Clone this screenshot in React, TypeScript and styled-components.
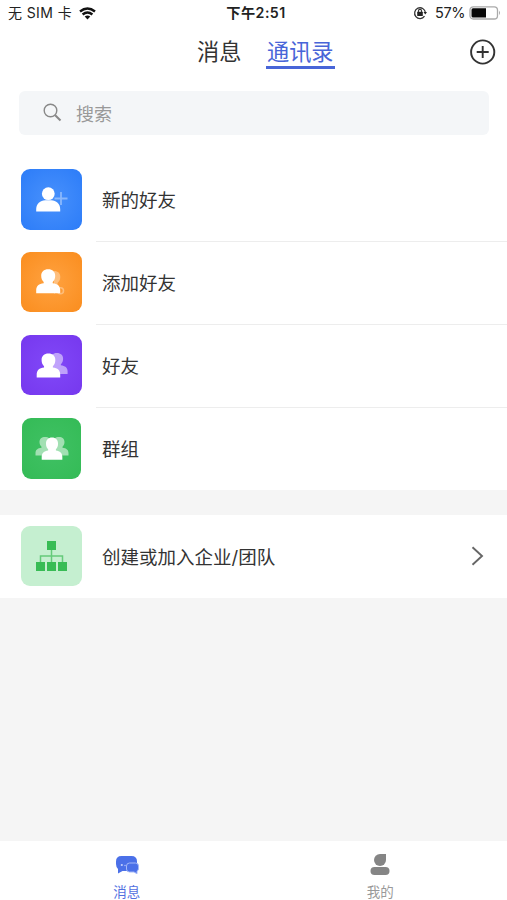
import React from 'react';
import styled, { createGlobalStyle } from 'styled-components';

const GlobalStyle = createGlobalStyle`
  * { box-sizing: border-box; }
  body { margin: 0; background: #f5f5f5; }
  svg { display: block; flex: none; }
`;

const Screen = styled.div`
  width: 507px;
  height: 900px;
  display: flex;
  flex-direction: column;
  overflow: hidden;
  background: #f5f5f5;
  color: #333;
  font-family: Inter, 'Noto Sans CJK SC', sans-serif;
`;

const Top = styled.header`
  background: #fff;
  height: 158px;
`;

const StatusBar = styled.div`
  height: 28px;
  display: grid;
  grid-template-columns: 1fr auto 1fr;
  align-items: center;
  padding: 0 6px 2px 8px;
  font-size: 14px;
  line-height: 20px;
  color: #222;
`;

const StatusSide = styled.div<{ $end?: boolean }>`
  display: flex;
  align-items: center;
  justify-content: ${(p) => (p.$end ? 'flex-end' : 'flex-start')};
  white-space: pre;
`;

const Carrier = styled.span`
  width: 71px;
  font-size: 14px;
  letter-spacing: 0.4px;
`;

const Clock = styled.div`
  font-weight: 600;
  font-size: 14.2px;
  letter-spacing: 0.45px;
  padding-left: 3px;
`;

const Percent = styled.span`
  width: 31px;
  margin: 0 3px 0 8px;
  font-size: 14.5px;
  letter-spacing: -0.35px;
`;

const Nav = styled.nav`
  height: 48px;
  display: grid;
  grid-template-columns: 197px 44px 25px 1fr 37px;
  align-items: start;
`;

const NavTab = styled.div<{ $active?: boolean }>`
  width: max-content;
  height: 41px;
  padding: 7px 1px 0;
  margin-left: ${(p) => (p.$active ? 0 : -1)}px;
  font-size: 22.2px;
  line-height: 33px;
  color: ${(p) => (p.$active ? '#4865d8' : '#333')};
  grid-column: ${(p) => (p.$active ? 4 : 2)};
  border-bottom: ${(p) => (p.$active ? '3px solid #4865d8' : '0')};
`;

const AddButton = styled.div`
  grid-column: 5;
  padding-top: 11px;
`;

const Search = styled.div`
  margin: 15px 18px 0 19px;
  height: 44px;
  border-radius: 6px;
  background: #f4f6f8;
  display: flex;
  align-items: center;
  gap: 14px;
  padding: 0 0 1px 24px;
  font-size: 18px;
  color: #999;
`;

const List = styled.section`
  background: #fff;
`;

const Row = styled.div`
  height: 83px;
  display: flex;
  align-items: center;
  padding-left: 21px;
`;

const RowBody = styled.div<{ $line?: boolean }>`
  flex: 1;
  height: 83px;
  margin-left: 14px;
  padding: 0 23px 1px 6px;
  display: flex;
  align-items: center;
  justify-content: space-between;
  font-size: 18.5px;
  box-shadow: ${(p) => (p.$line ? '0 1px 0 #ededed' : 'none')};
`;

const Tile = styled.div<{ $bg: string; $height?: number; $narrow?: boolean }>`
  width: ${(p) => (p.$narrow ? 59 : 61)}px;
  height: ${(p) => p.$height ?? 60}px;
  margin: 0 ${(p) => (p.$narrow ? 1 : 0)}px 1px;
  border-radius: 9px;
  background: ${(p) => p.$bg};
  display: flex;
  align-items: center;
  justify-content: center;
`;

const Team = styled(List)`
  margin-top: 25px;
`;

const TabBar = styled.footer`
  height: 59px;
  margin-top: auto;
  background: #fff;
  display: grid;
  grid-template-columns: 1fr 1fr;
`;

const Tab = styled.div<{ $active?: boolean }>`
  display: flex;
  flex-direction: column;
  align-items: center;
  padding-top: 13px;
  gap: 6px;
  font-size: 13.5px;
  line-height: 20px;
  color: ${(p) => (p.$active ? '#5370df' : '#999')};
`;

const PERSON = 'M12 0c4.300 0 7 2.500 7 6.500 0 3-1 4.700-2.500 6.200v1.300c4.800.6 7.500 2.700 7.500 7V24H0v-3c0-4.300 2.700-6.400 7.500-7v-1.300C6 11.200 5 9.500 5 6.500 5 2.500 7.700 0 12 0z';

const Wifi = () => (
  <svg width="17" height="13" viewBox="0 0 17 13" fill="none" stroke="#111" strokeWidth="2.4">
    <path d="M1 4.500Q8.500-1.700 16 4.500M3.600 7.500q4.900-4 9.800 0" />
    <path d="M5.700 9.500q2.800-2.200 5.600 0L8.500 12.500z" fill="#111" stroke="none" />
  </svg>
);

const RotationLock = () => (
  <svg width="14" height="14" viewBox="0 0 14 14" fill="none" stroke="#333">
    <path d="M11.500 10.200A5.400 5.400 0 1 1 12.400 6.500" strokeWidth="1.3" />
    <path d="M10.500 6h3.500l-1.700 2.500z" fill="#222" stroke="none" />
    <path d="M5.400 6V5a1.600 1.600 0 0 1 3.200 0v1" strokeWidth="1.1" />
    <rect x="4.200" y="5.800" width="5.600" height="4.200" rx=".5" fill="#222" stroke="none" />
  </svg>
);

const Battery = () => (
  <svg width="32" height="14" viewBox="0 0 32 14">
    <rect x="1" y=".8" width="27.5" height="12.2" rx="3.3" fill="#fff" stroke="#aaa" strokeWidth="1.3" />
    <path d="M4 2.300h13v9.200H4a1.500 1.500 0 0 1-1.500-1.500V3.800A1.500 1.500 0 0 1 4 2.300z" fill="#080808" />
    <path d="M30 4.800q2 2.100 0 4.200z" fill="#aaa" />
  </svg>
);

const NewFriendIcon = () => (
  <svg width="34" height="28" viewBox="0 0 34 28" fill="#fff">
    <circle cx="13.300" cy="8.700" r="6.400" />
    <path d="M1.200 26.500V24c0-5 4.100-8.700 9-8.700h6c4.900 0 9 3.700 9 8.700v2.500z" />
    <path d="M26 7v13M19.500 13.500h13" stroke="#fff" strokeWidth="1.800" opacity=".38" />
  </svg>
);

const AddFriendIcon = () => (
  <svg width="34" height="28" viewBox="0 0 34 28" fill="#fff">
    <g opacity=".34">
      <path d="M19 3c4 0 6.300 2.300 6.300 6 0 2.800-1.200 4.500-2.800 5.900v2L25 20l-6 6z" />
      <circle cx="25.500" cy="22.800" r="3" fill="none" stroke="#fff" strokeWidth="1.600" />
    </g>
    <path d={PERSON} transform="translate(1.200 1.200) scale(1)" />
  </svg>
);

const FriendsIcon = () => (
  <svg width="34" height="28" viewBox="0 0 34 28" fill="#fff">
    <path d={PERSON} transform="translate(11 2) scale(.9 .88)" opacity=".5" />
    <path d={PERSON} transform="translate(1.700 2.500) scale(.98 1)" />
  </svg>
);

const GroupIcon = () => (
  <svg width="34" height="28" viewBox="0 0 34 28" fill="#fff">
    <g opacity=".52">
      <path d={PERSON} transform="translate(.5 3) scale(.8 .77)" />
      <path d={PERSON} transform="translate(14.300 3) scale(.8 .77)" />
    </g>
    <path d={PERSON} transform="translate(6.700 3.500) scale(.86 .93)" />
  </svg>
);

const OrgIcon = () => (
  <svg width="32" height="30" viewBox="0 0 32 30" fill="#38bc55">
    <path d="M15.500 9v12M4.500 21v-6h22v6" fill="none" stroke="#65ca7a" strokeWidth="1.500" />
    <path d="M11 0h9v9h-9zM0 21h9v9H0zM11 21h9v9h-9zM22 21h9v9h-9z" />
  </svg>
);

const rows = [
  { name: '新的好友', bg: 'radial-gradient(#4891fc, #2c7cf8)', height: 61, icon: <NewFriendIcon /> },
  { name: '添加好友', bg: 'radial-gradient(#ffa240, #fa8d1e)', height: 60, icon: <AddFriendIcon /> },
  { name: '好友', bg: 'radial-gradient(#8148f8, #7638ee)', height: 60, icon: <FriendsIcon /> },
  { name: '群组', bg: 'radial-gradient(#40c164, #34bb56)', height: 61, narrow: true, icon: <GroupIcon /> },
];

export default function App() {
  return (
    <Screen>
      <GlobalStyle />
      <Top>
        <StatusBar>
          <StatusSide><Carrier>无 SIM 卡</Carrier><Wifi /></StatusSide>
          <Clock>下午2:51</Clock>
          <StatusSide $end><RotationLock /><Percent>57%</Percent><Battery /></StatusSide>
        </StatusBar>
        <Nav>
          <NavTab>消息</NavTab>
          <NavTab $active>通讯录</NavTab>
          <AddButton>
            <svg width="26" height="26" viewBox="0 0 26 26" fill="none" stroke="#333" strokeWidth="1.9">
              <circle cx="12.7" cy="13" r="11.6" /><path d="M12.700 7v12M6.700 13h12" />
            </svg>
          </AddButton>
        </Nav>
        <Search>
          <svg width="19" height="19" viewBox="0 0 19 19" fill="none" stroke="#888">
            <circle cx="7.500" cy="7.500" r="6.300" strokeWidth="1.400" />
            <path d="M12.200 12.200 17.500 17.500" strokeWidth="2" />
          </svg>
          <span>搜索</span>
        </Search>
      </Top>
      <List>
        {rows.map((r, i) => (
          <Row key={r.name}>
            <Tile $bg={r.bg} $height={r.height} $narrow={r.narrow}>{r.icon}</Tile>
            <RowBody $line={i < 3}>{r.name}</RowBody>
          </Row>
        ))}
      </List>
      <Team>
        <Row>
          <Tile $bg="#c5efd0"><OrgIcon /></Tile>
          <RowBody>
            <span>创建或加入企业/团队</span>
            <svg width="13" height="20" viewBox="0 0 13 20" fill="none" stroke="#666" strokeWidth="1.900">
              <path d="m1.500 1.300 9.500 8.700-9.500 8.700" />
            </svg>
          </RowBody>
        </Row>
      </Team>
      <TabBar>
        <Tab $active>
          <svg width="24" height="22" viewBox="0 0 24 22" fill="#4b70e8">
            <path d="M6.500 2h10Q22 2 22 7.500v4Q22 17 17 17H7.500L3 19.500V15Q1 13 1 10V7.500Q1 2 6.500 2z" />
            <path d="M14.500 9h6q3 0 3 3v2.500q0 2-1.500 2.700v2.600L19 18h-4.500q-3 0-3-3v-3q0-3 3-3z" stroke="#a6b9f8" strokeWidth="1" />
            <circle cx="6.800" cy="11" r="1.100" fill="#c4d0fc" /><circle cx="10" cy="11.500" r=".8" fill="#a6b9f8" />
          </svg>
          消息
        </Tab>
        <Tab>
          <svg width="20" height="22" viewBox="0 0 20 22" fill="#858585">
            <path d="M10 0h6v6A6 6 0 1 1 10 0z" />
            <rect x=".5" y="13" width="19" height="8" rx="4" />
          </svg>
          我的
        </Tab>
      </TabBar>
    </Screen>
  );
}
